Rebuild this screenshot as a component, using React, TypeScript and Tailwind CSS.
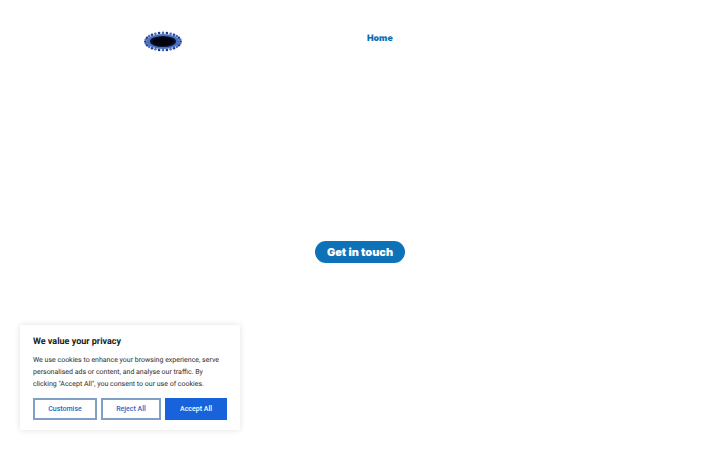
import React from "react";

function Logo() {
  const teeth = Array.from({ length: 28 }, (_, i) => {
    const a = (i / 28) * Math.PI * 2;
    return { x: 19 + Math.cos(a) * 17.6, y: 10.5 + Math.sin(a) * 8.6, odd: i % 2 === 1 };
  });
  return (
    <svg width="38" height="21" viewBox="0 0 38 21">
      {teeth.map((t, i) => (
        <circle key={i} cx={t.x} cy={t.y} r="1.3" fill={t.odd ? "#4a6fc0" : "#1f3a86"} />
      ))}
      <ellipse cx="19" cy="10.5" rx="16.5" ry="7.6" fill="#4a70c0" />
      <ellipse cx="19" cy="10.5" rx="13" ry="5.6" fill="#0a1030" />
      <ellipse cx="19" cy="10.5" rx="10.5" ry="4.2" fill="#02030a" />
    </svg>
  );
}

export default function App() {
  return (
    <div className="relative h-[450px] w-[720px] overflow-hidden bg-white [text-rendering:geometricPrecision]">
      <header className="flex h-[80px] items-start">
        <div className="flex w-[182px] justify-end pt-[31px]">
          <Logo />
        </div>
        <nav className="pl-[185px] pt-[32px]">
          <a className="block text-[8.8px] leading-[14px] font-black text-[#0e6fb4] [font-family:Inter,sans-serif]">Home</a>
        </nav>
      </header>

      <main className="flex justify-center pt-[161px]">
        <a className="flex h-[22px] w-[90px] items-center justify-center rounded-full bg-[#0e72b8] text-[11px] font-black text-white [font-family:Inter,sans-serif]">
          Get in touch
        </a>
      </main>

      <div className="absolute left-[20px] top-[325px] h-[105px] w-[220px] rounded-[2px] bg-white px-[13px] pt-[10px] shadow-[0_0_6px_rgba(0,0,0,0.12)] [font-family:Roboto,sans-serif]">
        <p className="text-[9px] leading-[14px] font-bold text-[#212121]">We value your privacy</p>
        <p className="mt-[5px] text-[7px] leading-[12px] text-[#2e2e2e]">
          We use cookies to enhance your browsing experience, serve personalised ads or content, and analyse our traffic. By clicking "Accept All", you consent to our use of cookies.
        </p>
        <div className="mt-[8px] flex gap-[4px]">
          <button className="h-[22px] w-[64px] border-2 border-[#7f9fc6] bg-white text-[7px] font-medium text-[#2b68c4]">Customise</button>
          <button className="h-[22px] w-[60px] border-2 border-[#7f9fc6] bg-white text-[7px] font-medium text-[#2b68c4]">Reject All</button>
          <button className="h-[22px] w-[62px] bg-[#1863dc] text-[7px] font-medium text-white">Accept All</button>
        </div>
      </div>
    </div>
  );
}
